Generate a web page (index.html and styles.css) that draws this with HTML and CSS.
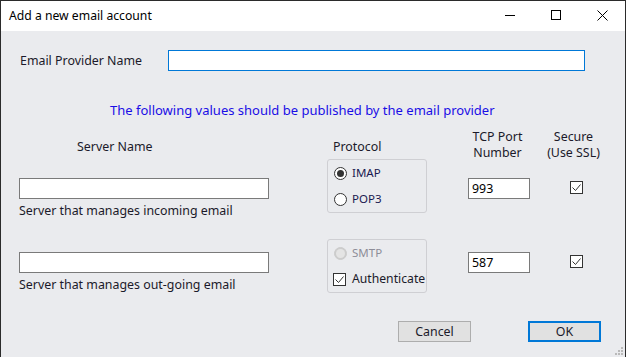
FILE: index.html
```html
<!DOCTYPE html>
<html lang="en">
<head>
<meta charset="utf-8">
<title>Add a new email account</title>
<link rel="stylesheet" href="styles.css">
</head>
<body>
<div class="window">
  <div class="titlebar">
    <span class="title">Add a new email account</span>
    <div class="caption">
      <span class="cbtn"><svg width="10" height="10" viewBox="0 0 10 10"><rect x="0" y="5" width="10" height="1" fill="#000"/></svg></span>
      <span class="cbtn"><svg width="10" height="10" viewBox="0 0 10 10"><rect x="0.5" y="0.5" width="9" height="9" fill="none" stroke="#000" stroke-width="1"/></svg></span>
      <span class="cbtn"><svg width="11" height="11" viewBox="0 0 11 11"><path d="M0.5 0.5 L10.5 10.5 M10.5 0.5 L0.5 10.5" stroke="#000" stroke-width="1" fill="none"/></svg></span>
    </div>
  </div>
  <div class="content">
    <div class="provider-row">
      <span class="provider-label">Email Provider Name</span>
      <input class="field provider-input" type="text">
    </div>
    <p class="notice">The following values should be published by the email provider</p>
    <div class="table">
      <div class="hdr hdr-server">Server Name</div>
      <div class="hdr hdr-proto">Protocol</div>
      <div class="hdr hdr-port">TCP Port<br>Number</div>
      <div class="hdr hdr-secure">Secure<br>(Use SSL)</div>

      <div class="cell-server in-row">
        <input class="field server-input" type="text">
        <div class="hint">Server that manages incoming email</div>
      </div>
      <div class="group in-row">
        <div class="opt"><span class="radio checked"></span><span>IMAP</span></div>
        <div class="opt"><span class="radio"></span><span>POP3</span></div>
      </div>
      <div class="cell-port in-row"><input class="field port-input" type="text" value="993"></div>
      <div class="cell-secure in-row"><span class="check"><svg width="11" height="11" viewBox="0 0 11 11"><path d="M1.5 5.5 L4.5 8.5 L9.5 2.5" stroke="#333" stroke-width="1" fill="none"/></svg></span></div>

      <div class="cell-server out-row">
        <input class="field server-input" type="text">
        <div class="hint">Server that manages out-going email</div>
      </div>
      <div class="group out-row">
        <div class="opt disabled"><span class="radio"></span><span>SMTP</span></div>
        <div class="opt opt-check"><span class="check"><svg width="11" height="11" viewBox="0 0 11 11"><path d="M1.5 5.5 L4.5 8.5 L9.5 2.5" stroke="#333" stroke-width="1" fill="none"/></svg></span><span>Authenticate</span></div>
      </div>
      <div class="cell-port out-row"><input class="field port-input" type="text" value="587"></div>
      <div class="cell-secure out-row"><span class="check"><svg width="11" height="11" viewBox="0 0 11 11"><path d="M1.5 5.5 L4.5 8.5 L9.5 2.5" stroke="#333" stroke-width="1" fill="none"/></svg></span></div>
    </div>
    <div class="buttons">
      <button class="btn" type="button">Cancel</button>
      <button class="btn btn-ok" type="button">OK</button>
    </div>
  </div>
  <svg class="grip" width="8" height="8" viewBox="0 0 8 8">
    <rect x="6" y="0" width="2" height="2" fill="#b9b9b9"/>
    <rect x="3" y="3" width="2" height="2" fill="#b9b9b9"/>
    <rect x="6" y="3" width="2" height="2" fill="#b9b9b9"/>
    <rect x="0" y="6" width="2" height="2" fill="#b9b9b9"/>
    <rect x="3" y="6" width="2" height="2" fill="#b9b9b9"/>
    <rect x="6" y="6" width="2" height="2" fill="#b9b9b9"/>
  </svg>
</div>
</body>
</html>
```

FILE: styles.css
```css
* { box-sizing: border-box; }
html, body { margin: 0; padding: 0; }
body {
  width: 626px;
  height: 357px;
  overflow: hidden;
  font-family: "Noto Sans", "Open Sans", sans-serif;
  font-size: 12.4px;
  color: #1b1a2a;
}
.window {
  position: relative;
  width: 626px;
  height: 357px;
  border: 1px solid #2b2b2b;
  border-bottom: none;
  background: #eaebee;
  display: flex;
  flex-direction: column;
}
.titlebar {
  height: 30px;
  background: #ffffff;
  display: flex;
  align-items: center;
  justify-content: space-between;
  flex: none;
}
.title {
  padding-left: 8px;
  color: #000;
  font-size: 12.2px;
  line-height: 16px;
}
.caption { display: flex; height: 30px; }
.cbtn {
  width: 46px;
  height: 30px;
  display: flex;
  justify-content: center;
  align-items: flex-start;
  padding-top: 9px;
}
.cbtn svg { display: block; }

.content { flex: 1; display: flex; flex-direction: column; }

.provider-row {
  margin-top: 19px;
  padding-left: 19px;
  display: flex;
  align-items: center;
  height: 21px;
}
.provider-label { width: 148px; line-height: 16px; }
.field {
  display: block;
  height: 21px;
  border: 1px solid #7a7a7a;
  background: #fff;
  font: inherit;
  color: #000;
  padding: 0 3px;
  margin: 0;
  outline: none;
}
.provider-input { width: 417px; border-color: #0078d7; }

.notice {
  margin: 31px 0 0 0;
  padding-left: 109px;
  line-height: 16px;
  font-size: 13px;
  color: #1a0ee6;
}

.table {
  margin-top: 11px;
  padding-left: 18px;
  display: grid;
  grid-template-columns: 250px 58px 100px 41px 62px 17px 53px;
  grid-template-rows: 30px 54px 26px 54px;
  line-height: 16px;
}
.hdr { grid-row: 1; }
.hdr-server { grid-column: 1; padding: 10px 0 0 58px; }
.hdr-proto { grid-column: 3; padding: 10px 0 0 6px; }
.hdr-port { grid-column: 5; text-align: center; padding-right: 3px; }
.hdr-secure { grid-column: 7; text-align: center; }

.in-row { grid-row: 2; }
.out-row { grid-row: 4; }
.cell-server { grid-column: 1; }
.group { grid-column: 3; }
.cell-port { grid-column: 5; }
.cell-secure { grid-column: 7; }

.server-input { width: 250px; }
.in-row .server-input, .in-row .port-input { margin-top: 19px; }
.out-row .server-input, .out-row .port-input { margin-top: 13px; }
.hint { margin-top: 4px; line-height: 16px; white-space: nowrap; }
.port-input { width: 62px; }

.group {
  border: 1px solid #cfcfd3;
  border-radius: 3px;
  padding: 5px 0 0 5px;
  display: flex;
  flex-direction: column;
  gap: 10px;
}
.opt {
  display: flex;
  align-items: center;
  height: 16px;
  gap: 5px;
  font-size: 11.5px;
  color: #1a1a50;
}
.radio {
  width: 13px;
  height: 13px;
  border: 1px solid #333;
  border-radius: 50%;
  background: #fff;
  margin-left: 1px;
  display: flex;
  align-items: center;
  justify-content: center;
  flex: none;
}
.radio.checked::after {
  content: "";
  width: 7px;
  height: 7px;
  border-radius: 50%;
  background: #333;
}
.opt.disabled { color: #8d8d98; }
.opt.disabled .radio { border-color: #cccccc; background: #cccccc; }
.opt.disabled .radio::after {
  content: "";
  width: 9px;
  height: 9px;
  border-radius: 50%;
  background: #e4e4e4;
}
.opt-check { gap: 6px; font-size: 12.2px; color: #1b1a2a; }

.check {
  display: flex;
  width: 13px;
  height: 13px;
  border: 1px solid #333;
  background: #fff;
  flex: none;
}
.check svg { display: block; }
.cell-secure .check { margin-left: 23px; }
.in-row.cell-secure .check { margin-top: 22px; }
.out-row.cell-secure .check { margin-top: 16px; }

.buttons {
  margin-top: 28px;
  padding-right: 24px;
  display: flex;
  justify-content: flex-end;
  gap: 57px;
}
.btn {
  width: 73px;
  height: 21px;
  border: 1px solid #adadad;
  background: #e1e1e1;
  font: inherit;
  color: #1b1a2a;
  padding: 0;
  margin: 0;
  line-height: 16px;
}
.btn-ok { border: 2px solid #0078d7; }

.grip {
  position: absolute;
  right: 2px;
  bottom: 2px;
  display: block;
}
```
